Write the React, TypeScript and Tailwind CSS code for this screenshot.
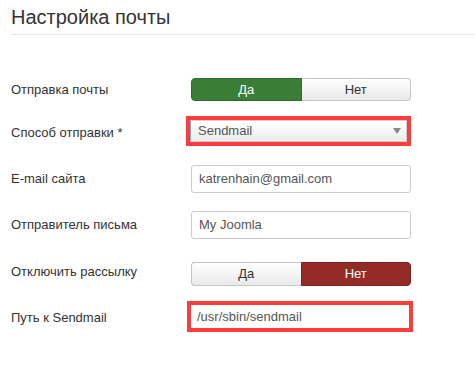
import React from 'react';

const font = { fontFamily: '"Liberation Sans", Arial, sans-serif' };

interface ToggleProps {
    yes: boolean;
    height: string;
}

const Toggle: React.FC<ToggleProps> = ({ yes, height }) => {
    return (
        <div className={`flex w-[220px] ${height} text-[13px]`}>
            {yes ? (
                <>
                    <button className="flex-1 rounded-l-[4px] border border-[#2f6b2a] bg-[#3a7d35] text-white">Да</button>
                    <button className="flex-1 rounded-r-[4px] border border-l-0 border-[#c4c4c4] bg-gradient-to-b from-white to-[#e9e9e9] text-[#333]">Нет</button>
                </>
            ) : (
                <>
                    <button className="flex-1 rounded-l-[4px] border border-r-0 border-[#c4c4c4] bg-gradient-to-b from-white to-[#e9e9e9] text-[#333]">Да</button>
                    <button className="flex-1 rounded-r-[4px] border border-[#7d231f] bg-[#942b27] text-white">Нет</button>
                </>
            )}
        </div>
    );
};

const Label: React.FC<{ text: string }> = ({ text }) => (
    <div className="w-[180px] text-[13px] text-[#333]">{text}</div>
);

export default function App() {
    return (
        <div className="w-[475px] h-[374px] bg-white pl-[11px]" style={font}>
            {/* Title */}
            <div className="pt-[6px] pb-[5px] border-b border-[#e8e8e8]">
                <h1 className="text-[20px] leading-[23px] text-[#333]">Настройка почты</h1>
            </div>

            {/* Send mail */}
            <div className="mt-[43px] flex items-center">
                <Label text="Отправка почты" />
                <Toggle yes={true} height="h-[23px]" />
            </div>

            {/* Mailer */}
            <div className="mt-[15px] flex items-center">
                <div className="w-[175px] text-[13px] text-[#333] translate-y-[2px]">Способ отправки *</div>
                <div className="w-[225px] h-[30px] border-[4px] border-[#fd3c3c] bg-white">
                    <div className="h-full flex items-center justify-between border border-[#cfcfcf] border-l-[#7aa7e6] bg-gradient-to-b from-white to-[#ececec] pl-[7px] pr-[5px] text-[13px] text-[#555]">
                        <span>Sendmail</span>
                        <span className="w-0 h-0 border-l-[4px] border-r-[4px] border-t-[6px] border-l-transparent border-r-transparent border-t-[#888]" />
                    </div>
                </div>
            </div>

            {/* Site email */}
            <div className="mt-[19px] flex items-center">
                <Label text="E-mail сайта" />
                <div className="w-[220px] h-[28px] flex items-center rounded-[3px] border border-[#cccccc] pl-[7px] text-[13px] text-[#555]">
                    katrenhain@gmail.com
                </div>
            </div>

            {/* From name */}
            <div className="mt-[18px] flex items-center">
                <Label text="Отправитель письма" />
                <div className="w-[220px] h-[28px] flex items-center rounded-[3px] border border-[#cccccc] pl-[7px] text-[13px] text-[#555]">
                    My Joomla
                </div>
            </div>

            {/* Disable mass mail */}
            <div className="mt-[23px] flex items-center">
                <div className="w-[180px] text-[13px] text-[#333] -translate-y-[2px]">Отключить рассылку</div>
                <Toggle yes={false} height="h-[24px]" />
            </div>

            {/* Sendmail path */}
            <div className="mt-[15px] flex items-center">
                <div className="w-[176px] text-[13px] text-[#333] translate-y-[1px]">Путь к Sendmail</div>
                <div className="w-[226px] h-[31px] border-[4px] border-[#fd3c3c] bg-white flex items-center pl-[6px] text-[13px] text-[#555]">
                    /usr/sbin/sendmail
                </div>
            </div>
        </div>
    );
}
